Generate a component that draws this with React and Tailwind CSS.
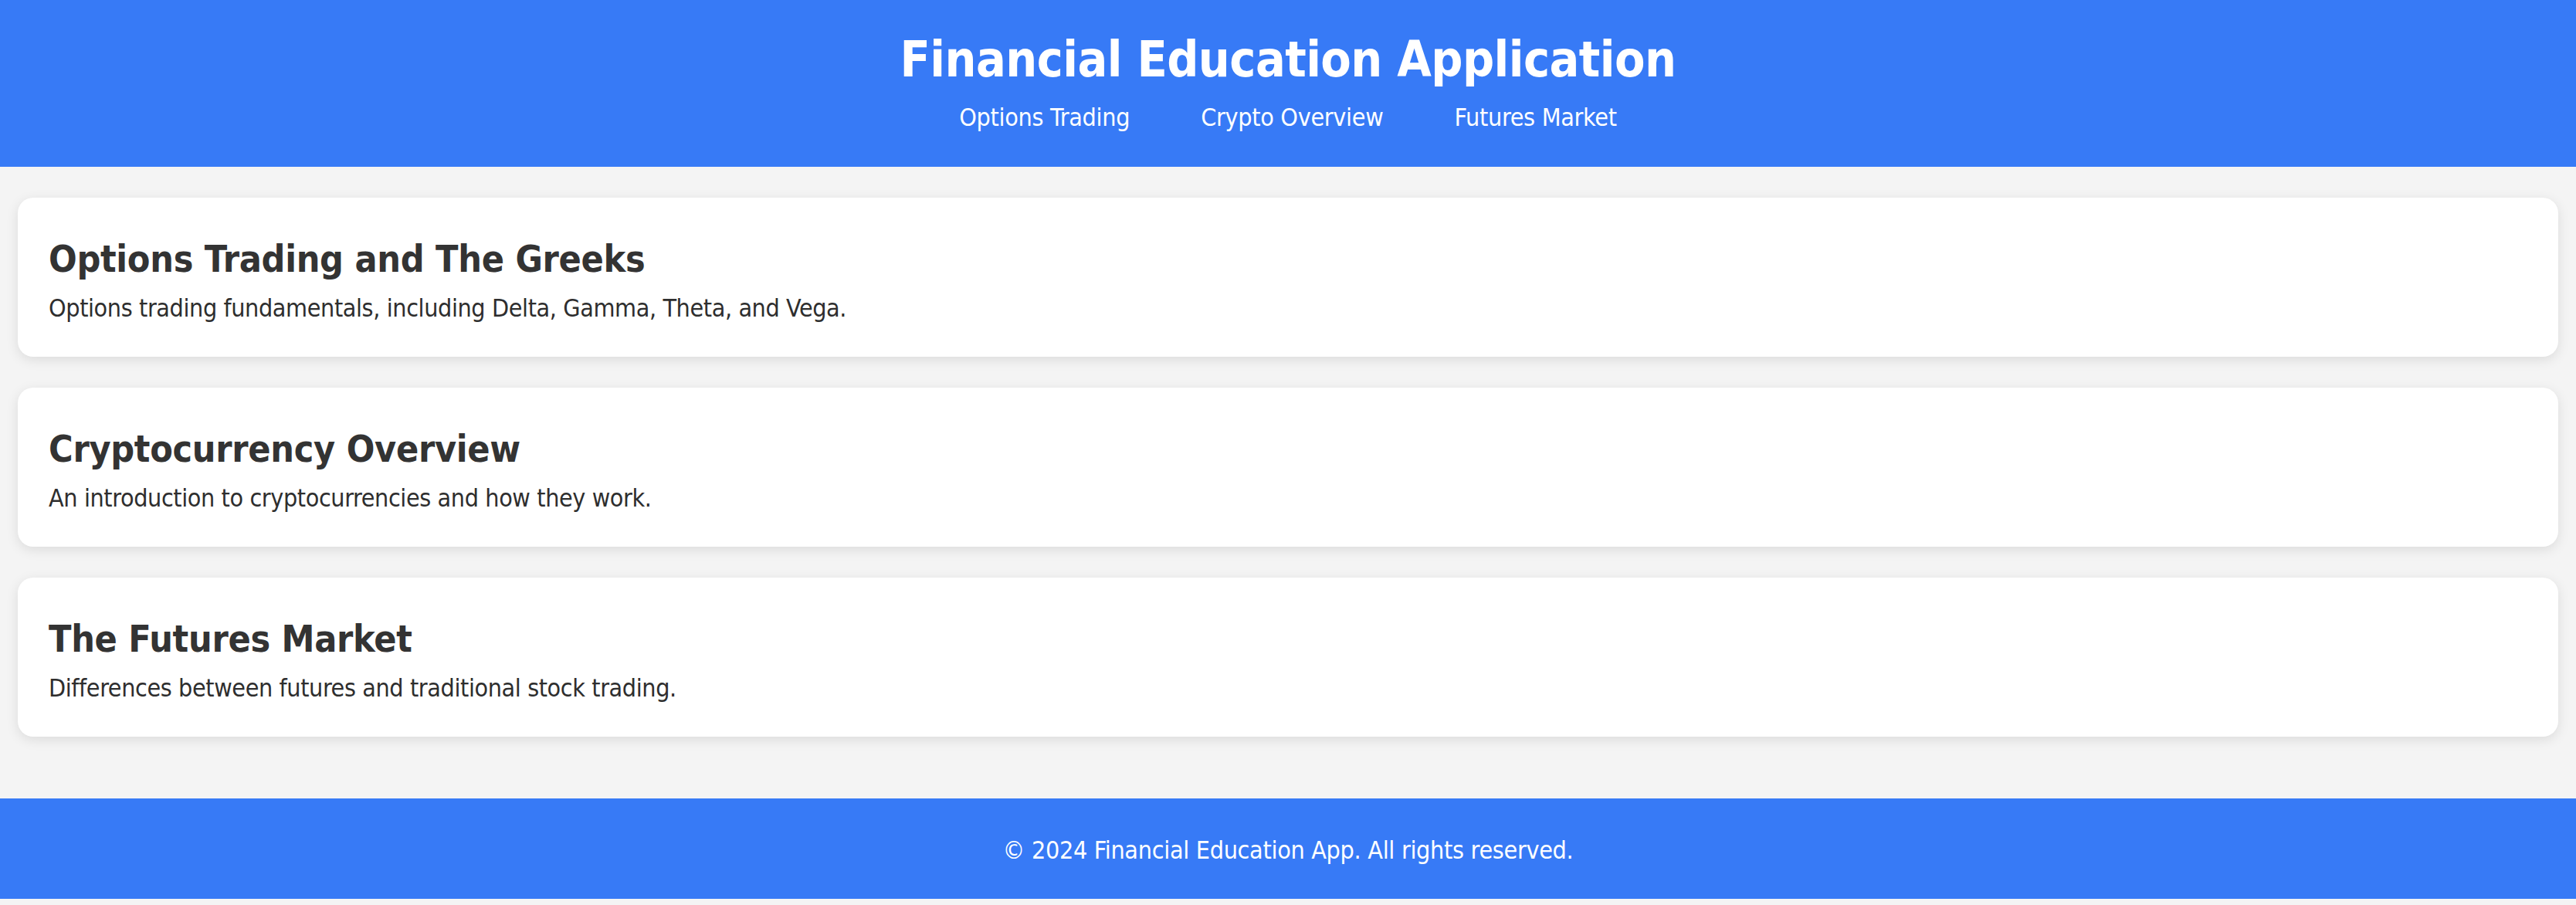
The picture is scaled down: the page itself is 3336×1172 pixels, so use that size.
const TOPICS = [
  {
    title: "Options Trading and The Greeks",
    text: "Options trading fundamentals, including Delta, Gamma, Theta, and Vega.",
  },
  {
    title: "Cryptocurrency Overview",
    text: "An introduction to cryptocurrencies and how they work.",
  },
  {
    title: "The Futures Market",
    text: "Differences between futures and traditional stock trading.",
  },
];

const NAV = ["Options Trading", "Crypto Overview", "Futures Market"];

function TopicCard({ title, text }) {
  return (
    <section className="rounded-[20px] bg-white px-[40px] pt-[50px] pb-[44px] shadow-[0_4px_16px_rgba(0,0,0,0.1)]">
      <h2 className="text-[48px] font-bold leading-[58px] tracking-[-0.3px] text-[#333]">{title}</h2>
      <p className="mt-[16px] text-[32px] leading-[38px] tracking-[-0.4px] text-[#2e2e2e]">{text}</p>
    </section>
  );
}

export default function App() {
  return (
    <div className="min-h-screen bg-[#f4f4f4] font-['DejaVu_Sans_Condensed','Liberation_Sans',sans-serif]">
      <header className="bg-[#377af6] pt-[39px] pb-[45px] text-center text-white">
        <h1 className="text-[64px] font-bold leading-[77px] tracking-[-0.55px]">Financial Education Application</h1>
        <nav className="mt-[17px] flex justify-center gap-[92px] text-[32px] leading-[38px] tracking-[-0.3px]">
          {NAV.map((item) => (
            <a key={item} href="#" className="text-white">
              {item}
            </a>
          ))}
        </nav>
      </header>

      <main className="flex flex-col gap-[40px] px-[23px] pt-[40px] pb-[80px]">
        {TOPICS.map((t) => (
          <TopicCard key={t.title} title={t.title} text={t.text} />
        ))}
      </main>

      <footer className="bg-[#377af6] pt-[48px] pb-[44px] text-center text-[32px] leading-[38px] tracking-[-0.3px] text-white">
        <p>© 2024 Financial Education App. All rights reserved.</p>
      </footer>
    </div>
  );
}
